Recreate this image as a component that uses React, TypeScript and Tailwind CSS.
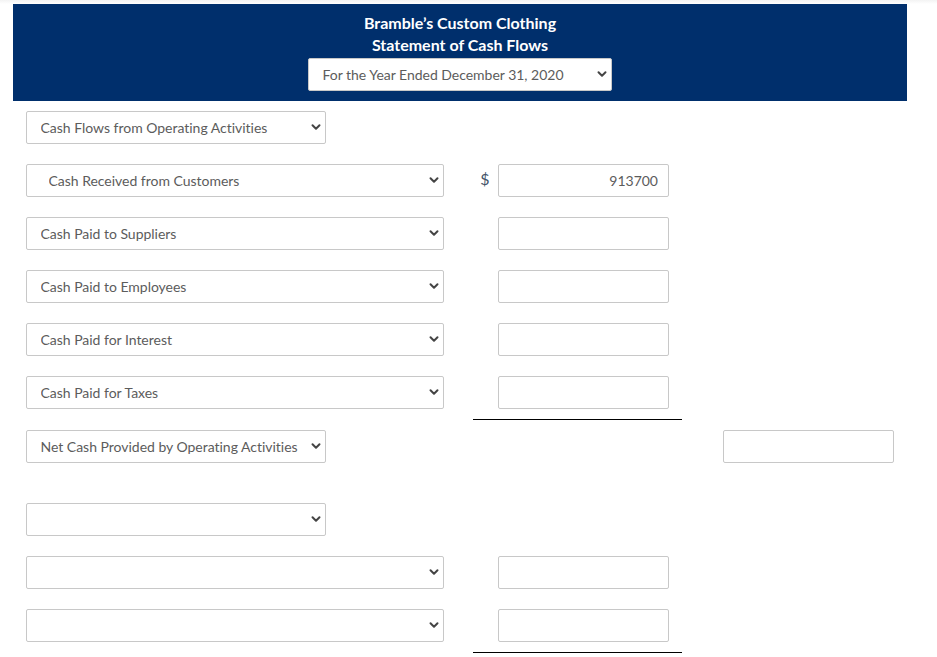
import { ChevronDown } from 'lucide-react'

const font = { fontFamily: 'Lato, "Open Sans", sans-serif' }

function Select({
  value,
  width,
  indent,
}: {
  value: string
  width: string
  indent?: boolean
}) {
  return (
    <div className={`relative h-[33px] shrink-0 ${width}`}>
      <select
        defaultValue={value}
        className={`h-full w-full appearance-none rounded-[2px] border border-[#c8c8c8] bg-white text-[14px] tracking-[-0.02px] text-[#5c5c5c] outline-none ${
          indent ? 'pl-[21.5px]' : 'pl-[13.5px]'
        }`}
      >
        <option value={value}>{value}</option>
      </select>
      <ChevronDown
        className="pointer-events-none absolute right-[3px] top-[9px] h-[14px] w-[14px] text-[#444444]"
        strokeWidth={3.4}
      />
    </div>
  )
}

function Amount({ value = '' }: { value?: string }) {
  return (
    <input
      readOnly
      value={value}
      className="h-[33px] w-[171px] shrink-0 rounded-[2px] border border-[#c8c8c8] bg-white px-[10px] text-right text-[14px] text-[#5c5c5c] outline-none"
    />
  )
}

function Row({
  label,
  value,
  dollar,
  indent,
  underline,
}: {
  label: string
  value?: string
  dollar?: boolean
  indent?: boolean
  underline?: boolean
}) {
  return (
    <div className="flex h-[33px] items-start">
      <Select value={label} width="w-[418px]" indent={indent} />
      <div className="relative ml-[29px] flex h-[33px] w-[225px] shrink-0 items-start">
        <span className="w-[25px] pr-[1px] pt-[4px] text-center text-[16px] leading-[22px] text-[#44546a]">
          {dollar ? '$' : ''}
        </span>
        <Amount value={value} />
        {underline && <div className="absolute left-0 top-[43px] h-[1px] w-[209px] bg-black" />}
      </div>
    </div>
  )
}

export default function App() {
  return (
    <div
      className="h-[657px] w-[937px] overflow-hidden bg-[linear-gradient(#f3f3f3,#ffffff_4px)] pl-[13px] pt-[4px]"
      style={font}
    >
      <div className="flex h-[97px] w-[894px] flex-col items-center bg-[#002f6c] pt-[8px]">
        <div className="text-center text-[16px] font-bold leading-[22px] text-white">
          Bramble’s Custom Clothing
        </div>
        <div className="text-center text-[16px] font-bold leading-[22px] text-white">
          Statement of Cash Flows
        </div>
        <div className="mt-[2px]">
          <Select value="For the Year Ended December 31, 2020" width="w-[304px]" />
        </div>
      </div>

      <div className="pl-[13px]">
        <div className="mt-[10px]">
          <Select value="Cash Flows from Operating Activities" width="w-[300px]" />
        </div>

        <div className="mt-[20px] flex flex-col gap-[20px]">
          <Row label="Cash Received from Customers" value="913700" dollar indent />
          <Row label="Cash Paid to Suppliers" />
          <Row label="Cash Paid to Employees" />
          <Row label="Cash Paid for Interest" />
          <Row label="Cash Paid for Taxes" underline />
        </div>

        <div className="mt-[21px] flex items-start">
          <Select value="Net Cash Provided by Operating Activities" width="w-[300px]" />
          <div className="ml-[397px]">
            <Amount />
          </div>
        </div>

        <div className="mt-[40px]">
          <Select value="" width="w-[300px]" />
        </div>

        <div className="mt-[20px] flex flex-col gap-[20px]">
          <Row label="" />
          <Row label="" underline />
        </div>
      </div>
    </div>
  )
}
